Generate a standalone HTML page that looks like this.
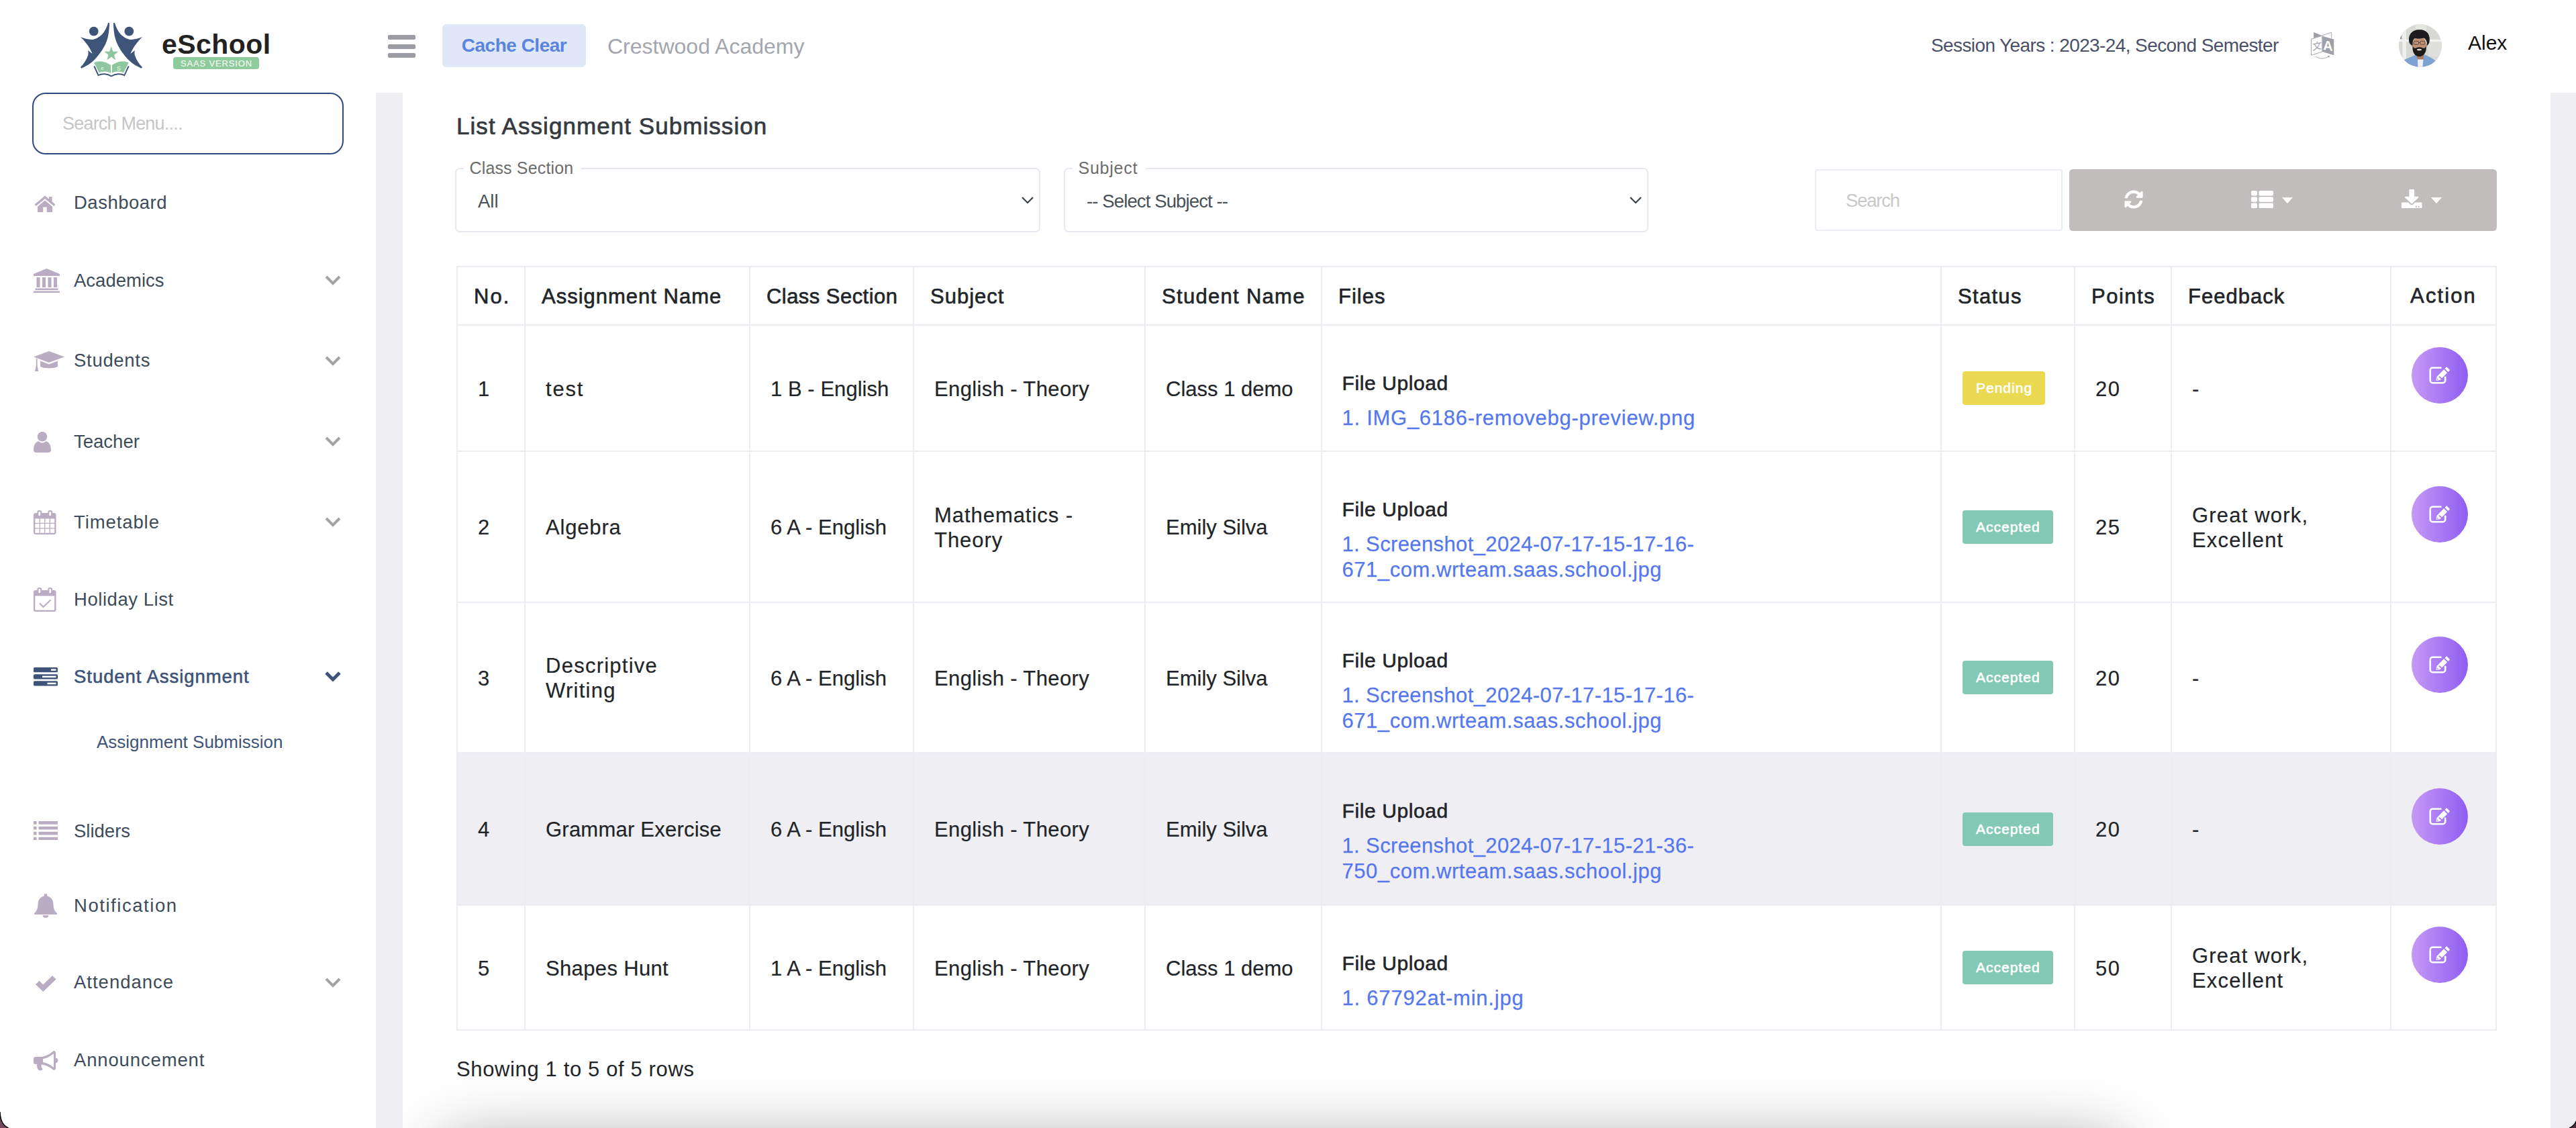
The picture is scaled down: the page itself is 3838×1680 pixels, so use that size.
<!DOCTYPE html>
<html lang="en">
<head>
<meta charset="utf-8">
<title>Assignment Submission - eSchool SaaS</title>
<style>
*{box-sizing:border-box;margin:0;padding:0}
html,body{width:3838px;height:1680px;overflow:hidden;background:#fff}
body{position:relative;font-family:"Liberation Sans",Arial,sans-serif;color:#212529;font-size:31px}
.abs{position:absolute;white-space:nowrap;line-height:1}
a{text-decoration:none;color:inherit}
ul{list-style:none}
/* ---------- top bar ---------- */
#topbar{position:absolute;left:0;top:0;width:3838px;height:138px;background:#fff}
#brand{position:absolute;left:0;top:0;width:560px;height:138px}
#brand .name{left:241px;top:45.5px;font-size:41px;font-weight:700;color:#222;letter-spacing:.45px}
#brand .saas{left:258px;top:85px;width:128px;height:18px;border-radius:4px;background:#8fcb9c;color:#fff;font-size:13px;line-height:20px;text-align:center;letter-spacing:.85px;padding-left:1px}
#burger{position:absolute;left:578px;top:52px;width:41px;height:34px}
#burger i{position:absolute;left:0;width:41px;height:7px;border-radius:2px;background:#9c9ca4}
#cache{left:659px;top:36px;width:214px;height:64px;border-radius:6px;background:#dfe7f8;color:#5b84dc;font-weight:700;font-size:28px;line-height:64px;text-align:center;letter-spacing:-.5px}
#school{left:905px;top:51px;font-size:32px;color:#a3a6ad;line-height:36px}
#session{left:2877px;top:50px;font-size:28px;letter-spacing:-.6px;color:#4b5069;line-height:36px}
#lang{position:absolute;left:3442px;top:47px;width:38px;height:41px}
#avatar{position:absolute;left:3574px;top:36px;width:64px;height:64px;border-radius:50%;overflow:hidden}
#uname{left:3677px;top:46px;font-size:30px;color:#111;line-height:36px}
/* ---------- sidebar ---------- */
#sidebar{position:absolute;left:0;top:138px;width:560px;height:1542px;background:#fff}
#menusearch{position:absolute;left:48px;top:0;width:464px;height:92px;border:2px solid #2f4a80;border-radius:20px;padding-left:43px;font-size:27px;line-height:88px;color:#c6c6c6;letter-spacing:-.8px}
#nav li{position:absolute;left:0;width:560px;height:60px}
#nav li svg.ic{position:absolute;fill:#b9acc3}
#nav li .t{position:absolute;left:110px;font-size:27.5px;line-height:34px;color:#3e4b5b;white-space:nowrap}
#nav li svg.ch{position:absolute;left:484px;width:24px;height:15px;fill:none;stroke:#a3a3a3;stroke-width:4}
#nav li.act .t{color:#3e5379;font-weight:400;-webkit-text-stroke:.6px #3e5379}
#nav li.act svg.ic{fill:#3e5379}
#nav li.act svg.ch{stroke:#3e5379;stroke-width:5}
#nav li.sub .t{left:144px;font-weight:400;-webkit-text-stroke:0;color:#3e5379;font-size:26px}
/* ---------- content ---------- */
#content{position:absolute;left:560px;top:138px;width:3278px;height:1542px;background:#f0eff4}
#card{position:absolute;left:40px;top:0;width:3200px;height:1542px;background:#fff;overflow:hidden}

#title{left:80px;top:30px;font-size:35px;font-weight:400;-webkit-text-stroke:.7px #343a40;color:#343a40;line-height:40px;letter-spacing:1.06px}
.fs{position:absolute;top:112px;height:96px;border:2px solid #e9e8f0;border-radius:7px}
.fs .lg{position:absolute;left:11px;top:-19.5px;height:34px;background:#fff;padding-left:8.5px;font-size:25px;letter-spacing:.15px;line-height:34px;color:#6c6c6c;white-space:nowrap}
.fs .lg em{font-style:normal}
.fs .val{position:absolute;left:32px;top:30.5px;font-size:27.500px;line-height:34px;color:#495057;white-space:nowrap}
.fs .chev{position:absolute;right:8px;top:41px;width:18px;height:11px;fill:none;stroke:#3c4148;stroke-width:2.200}
#search{position:absolute;left:2104px;top:114px;width:369px;height:92px;border:2px solid #ebedf2;border-radius:4px;padding-left:44px;font-size:27.500px;line-height:90px;color:#c9c8c8;letter-spacing:-1.2px}
#tools{position:absolute;left:2483px;top:114px;width:637px;height:92px;border-radius:5.5px;background:#c1bdbc}
#tools svg{position:absolute;fill:#fff}
#tbl{position:absolute;left:80px;top:258px;width:3040px;table-layout:fixed;border-collapse:separate;border-spacing:0;border-right:2px solid #ebedf2;border-bottom:2px solid #ebedf2}
#tbl th,#tbl td{border-left:2px solid #ebedf2;border-top:2px solid #ebedf2;text-align:left;vertical-align:middle;line-height:37px}
#tbl th{height:87px;padding:2px 0 0 24px;font-size:31px;font-weight:400;-webkit-text-stroke:.65px #212529;letter-spacing:1px;color:#212529;white-space:nowrap}
#tbl td{padding:2px 0 0 30px;font-size:31px;color:#212529;letter-spacing:.5px;-webkit-text-stroke:.2px #212529}
#tbl th.ac{text-align:center;padding:0}
#tbl tr.hov td{background:#efeef3}
#tbl td.fl{vertical-align:top;padding-top:67px;padding-left:29.5px}
#tbl td.fl b{display:block;font-size:30px;font-weight:400;-webkit-text-stroke:.6px #212529;line-height:37px;color:#212529;letter-spacing:.6px}
#tbl td.fl .lnk{display:block;margin-top:15px;color:#5577ee;-webkit-text-stroke:.25px #5577ee;line-height:37.500px}
#tbl td.fl .lnk{width:700px}
#tbl td.fl .lnk span{display:inline}
.bdg{display:inline-block;height:50px;line-height:50px;padding:0 20px;border-radius:4px;color:#fff;font-size:21px;font-weight:400;-webkit-text-stroke:.6px #fff;vertical-align:middle;letter-spacing:1px;position:relative;top:-1px;left:1px;padding-right:19px}
.bdg.pending{background:#ecd952}
.bdg.accepted{background:#83c9b4}
#tbl td.ac{padding:0 0 0 30px}
.edit{display:block;width:84px;height:84px;border-radius:50%;background:linear-gradient(to right,#c699f6,#8e5df1);margin-bottom:38px;position:relative}
.edit svg{position:absolute;left:26px;top:29px}
#showing{left:80px;top:1435.5px;letter-spacing:.63px;font-size:31px;line-height:37px;color:#212529}
#shadow{position:absolute;left:60px;top:1574px;width:2500px;height:100px;border-radius:50px;box-shadow:0 0 90px 20px rgba(0,0,0,.32)}
</style>
</head>
<body>
<header id="topbar">
  <div id="brand">
    <svg class="abs" style="left:119px;top:33px" width="94" height="82" viewBox="0 0 94 82">
      <g fill="#3f5479">
        <circle cx="20.700" cy="13.700" r="6.900"/><path d="M42.200 0.900L44 0.900C44 8 43 20 40.200 27.500C37 37 30 47 22 55.800C16 62 9 66 2.500 68.700L0.900 67.300C5 63 10 56 12.300 48.700C12.800 46 12.500 44 12.100 42.100L18.500 47C17 43 15.500 40.500 14 38C11 33 6 27 0.900 22.100C6 24 12 26 17.600 26.100C22 26 28 23 33.500 17.700C37 13.500 40 8 42.200 0.900Z"/>
        <g transform="translate(94,0) scale(-1,1)"><circle cx="20.700" cy="13.700" r="6.900"/><path d="M42.200 0.900L44 0.900C44 8 43 20 40.200 27.500C37 37 30 47 22 55.800C16 62 9 66 2.500 68.700L0.900 67.300C5 63 10 56 12.300 48.700C12.800 46 12.500 44 12.100 42.100L18.500 47C17 43 15.500 40.500 14 38C11 33 6 27 0.900 22.100C6 24 12 26 17.600 26.100C22 26 28 23 33.500 17.700C37 13.500 40 8 42.200 0.900Z"/></g>
      </g>
      <path d="M21.300 65.500L27.500 79.200C33 76.200 41 76.700 46.900 80.500C53 76.700 61 76.200 66.300 79.200L72.700 65.500" fill="none" stroke="#3f5479" stroke-width="1.900"/>
      <g fill="#8ec79f">
        <path d="M46.8 36.0L49.4 43.7L57.5 43.8L51.1 48.7L53.4 56.4L46.8 51.8L40.2 56.4L42.5 48.7L36.1 43.8L44.2 43.7z"/>
        <path d="M21.100 60.200C27 57.300 38 57.500 46 64.200L46 75.800C40 72.500 34 73 28.700 75.300Z"/>
        <path d="M72.700 60.200C66.800 57.300 55.800 57.500 47.800 64.200L47.800 75.800C53.800 72.500 59.800 73 65.100 75.300Z"/>
      </g>
      <text x="33.500" y="71" font-family="Liberation Sans, sans-serif" font-size="8" fill="#eef7f0" text-anchor="middle">e</text><text x="58" y="71.500" font-family="Liberation Sans, sans-serif" font-size="9" fill="#eef7f0" text-anchor="middle">S</text>
    </svg>
    <div class="abs name">eSchool</div>
    <div class="abs saas">SAAS VERSION</div>
  </div>
  <div id="burger"><i style="top:0"></i><i style="top:13.500px"></i><i style="top:27px"></i></div>
  <a class="abs" id="cache">Cache Clear</a>
  <div class="abs" id="school">Crestwood Academy</div>
  <div class="abs" id="session">Session Years : 2023-24, Second Semester</div>
  <svg id="lang" viewBox="0 0 38 41"><path d="M5.100 1.050L17.800 5.900L5.100 9.800z" fill="#9ea0a8"/><path d="M17.800 5.800L31.700 1.200V9.800" fill="#fff" stroke="#9ea0a8" stroke-width=".9"/><path d="M1.500 11.400L17.800 6.300V30.100L1.500 35.300z" fill="#fff" stroke="#9ea0a8" stroke-width=".9"/><path d="M18.100 6.700L35.300 11.500V35.200L18.100 30.100z" fill="#9ea0a8"/><text x="26.600" y="28" font-family="Liberation Sans, sans-serif" font-weight="700" font-size="20" fill="#fff" text-anchor="middle" transform="skewY(8)" style="transform-origin:26px 20px">A</text><text x="10.200" y="26.500" font-family="Liberation Sans, Noto Sans CJK JP, sans-serif" font-size="14" fill="#9ea0a8" text-anchor="middle" transform="skewY(-10)" style="transform-origin:10px 20px">文</text><path d="M8 37.100c5.500 4 13 4 19.500 0" fill="none" stroke="#9ea0a8" stroke-width=".9"/><path d="M25.800 36l3.400-.1-1.600 3z" fill="#9ea0a8"/></svg>
  <div id="avatar">
    <svg width="64" height="64" viewBox="0 0 64 64"><rect width="64" height="64" fill="#d6d9d4"/><rect x="25" y="0" width="16" height="22" fill="#e4e7e2"/><rect x="44" y="26" width="20" height="22" fill="#dfe0dc"/><rect x="5.500" y="0" width="5.500" height="64" fill="#eef0ed"/><rect x="0" y="23" width="18" height="3" fill="#f1f2f0"/><rect x="44" y="23" width="20" height="3" fill="#f3f4f2"/><rect x="0" y="12" width="4" height="10" fill="#8e9186"/><path d="M8 53C16 49.500 22 47.500 25 45.500L39 45.500C44 48 50 51 54 54L60 64L4 64Z" fill="#7ea3d3"/><path d="M25.500 42L38 42L36.500 53L28 53Z" fill="#a97a5f"/><path d="M28 52.500L36.500 52.500L35.500 64L28.500 64Z" fill="#eef0f4"/><circle cx="20.600" cy="31" r="2.300" fill="#b98a6e"/><circle cx="41" cy="31" r="2.300" fill="#b98a6e"/><ellipse cx="30.600" cy="30" rx="9.900" ry="12.500" fill="#c09072"/><path d="M15.500 27C13 14 22 7.500 30.500 8.200C40 7.500 48 14 45.500 27C44.500 30 43 31 42 31.500C42.500 26 40 21.500 37 20.500C32 22 26 21.500 23.500 21C21 23 20.500 27 20.500 31.500C18.500 31 16.500 30 15.500 27Z" fill="#1d1b1e"/><path d="M20.700 32C22 36 24 36.500 26 35.300C29 33.800 32 33.800 35 35.300C37.500 36.500 39.500 36 40.700 32C42 42 37 48.200 30.600 48.200C24 48.200 19.500 42 20.700 32Z" fill="#1f1a1a"/><ellipse cx="30.500" cy="38" rx="3.600" ry="1.300" fill="#e8dfd8"/><g fill="none" stroke="#40383a" stroke-width=".8"><rect x="22.300" y="25.300" width="7.200" height="5" rx="1.600"/><rect x="31.700" y="25.300" width="7.200" height="5" rx="1.600"/><path d="M29.500 27.500h2.200"/></g></svg>
  </div>
  <div class="abs" id="uname">Alex</div>
</header>
<aside id="sidebar">
  <div id="menusearch">Search Menu....</div>
  <ul id="nav">
    <li style="top:133.5px"><svg class="ic" style="left:51px;top:18.5px" width="32" height="26" viewBox="0 0 32 26"><path d="M16 1.500L0.500 14.500l2.200 2.600L16 6l13.300 11.100 2.200-2.600-5-4.200V3h-4.500v3.600z"/><path d="M16 8.500L5 17.700V26h8.200v-7.500h5.600V26H27v-8.300z"/></svg><a class="t" style="top:13.5px;letter-spacing:0.5px">Dashboard</a></li>
    <li style="top:249.5px"><svg class="ic" style="left:50px;top:12.5px" width="39" height="36" viewBox="0 0 39 36"><path d="M19.500 0L39 8v3H0V8z"/><path d="M4.500 13h5v15h-5zM13 13h5v15h-5zM21.500 13h5v15h-5zM30 13h5v15h-5z"/><path d="M2.500 29.500h34v2.500h-34zM0 33.500h39V36H0z"/></svg><a class="t" style="top:13.5px">Academics</a><svg class="ch" style="top:22.5px" viewBox="0 0 24 15"><polyline points="2,2 12,12 22,2"/></svg></li>
    <li style="top:368.5px"><svg class="ic" style="left:50px;top:16px" width="46" height="32" viewBox="0 0 46 32"><path d="M23 0l23 8.500L23 17 0 8.500z"/><path d="M10 14.500l13 5 13-5V22c0 4.500-26 4.500-26 0z"/><path d="M3.800 10.500l1.800.7V21l1.600 9H2.200l1.600-9z"/></svg><a class="t" style="top:13.5px;letter-spacing:0.7px">Students</a><svg class="ch" style="top:23.5px" viewBox="0 0 24 15"><polyline points="2,2 12,12 22,2"/></svg></li>
    <li style="top:489.5px"><svg class="ic" style="left:50px;top:15px" width="26" height="31" viewBox="0 0 26 31"><circle cx="13" cy="7.300" r="7.300"/><path d="M0 27.500C0 19 3.500 14.800 8 14.300c1.500 1.600 3 2.300 5 2.300s3.500-.7 5-2.300c4.500.5 8 4.700 8 13.200 0 2-1.500 3.500-4 3.500H4c-2.500 0-4-1.500-4-3.500z"/></svg><a class="t" style="top:13.5px">Teacher</a><svg class="ch" style="top:22.5px" viewBox="0 0 24 15"><polyline points="2,2 12,12 22,2"/></svg></li>
    <li style="top:609.5px"><svg class="ic" style="left:50px;top:12.5px" width="33.5" height="36" viewBox="0 0 33.5 36"><path d="M3 4h27.500a3 3 0 0 1 3 3v26a3 3 0 0 1-3 3H3a3 3 0 0 1-3-3V7a3 3 0 0 1 3-3z"/><path fill="#fff" d="M2.30 12.50h6.25v6.2h-6.25zM9.85 12.50h6.25v6.2h-6.25zM17.40 12.50h6.25v6.2h-6.25zM24.95 12.50h6.25v6.2h-6.25zM2.30 20.00h6.25v6.2h-6.25zM9.85 20.00h6.25v6.2h-6.25zM17.40 20.00h6.25v6.2h-6.25zM24.95 20.00h6.25v6.2h-6.25zM2.30 27.50h6.25v6.2h-6.25zM9.85 27.50h6.25v6.2h-6.25zM17.40 27.50h6.25v6.2h-6.25zM24.95 27.50h6.25v6.2h-6.25z"/><rect x="5.300" y="0" width="7" height="10.500" rx="3.300"/><rect x="21.200" y="0" width="7" height="10.500" rx="3.300"/><g fill="#fff"><rect x="7.400" y="2" width="2.800" height="6.300" rx="1.400"/><rect x="23.300" y="2" width="2.800" height="6.300" rx="1.400"/></g></svg><a class="t" style="top:13.5px;letter-spacing:0.9px">Timetable</a><svg class="ch" style="top:22.5px" viewBox="0 0 24 15"><polyline points="2,2 12,12 22,2"/></svg></li>
    <li style="top:724.5px"><svg class="ic" style="left:50px;top:12.5px" width="33.5" height="36" viewBox="0 0 33.5 36"><path d="M3 4h27.500a3 3 0 0 1 3 3v26a3 3 0 0 1-3 3H3a3 3 0 0 1-3-3V7a3 3 0 0 1 3-3z"/><path fill="#fff" d="M2.300 12.500h28.900v21.200H2.300z"/><rect x="5.300" y="0" width="7" height="10.500" rx="3.300"/><rect x="21.200" y="0" width="7" height="10.500" rx="3.300"/><g fill="#fff"><rect x="7.400" y="2" width="2.800" height="6.300" rx="1.400"/><rect x="23.300" y="2" width="2.800" height="6.300" rx="1.400"/></g><polyline points="9,23.500 14.500,29 25.500,18.500" fill="none" stroke="#b9acc3" stroke-width="2.100"/></svg><a class="t" style="top:13.5px;letter-spacing:0.55px">Holiday List</a></li>
    <li class="act" style="top:839.5px"><svg class="ic" style="left:50px;top:16.5px" width="36" height="27.5" viewBox="0 0 36 27.5"><rect x="0" y="0" width="36" height="7.300" rx="1.600"/><rect x="0" y="10.200" width="36" height="7.300" rx="1.600"/><rect x="0" y="20.300" width="36" height="7.300" rx="1.600"/><g fill="#fff"><rect x="26" y="2.400" width="7.500" height="2.500"/><rect x="13" y="12.600" width="20.500" height="2.500"/><rect x="20.500" y="22.700" width="13" height="2.500"/></g></svg><a class="t" style="top:13.5px;letter-spacing:.95px">Student Assignment</a><svg class="ch" style="top:22.5px" viewBox="0 0 24 15"><polyline points="2,2 12,12 22,2"/></svg></li>
    <li class="sub" style="top:936px"><a class="t" style="top:13.5px">Assignment Submission</a></li>
    <li style="top:1069.5px"><svg class="ic" style="left:50px;top:15px" width="36" height="28.5" viewBox="0 0 36 28.5"><path d="M0 0h4.600v4.700H0zM7.500 0H36v4.700H7.500zM0 7.9h4.600v4.700H0zM7.500 7.9H36v4.700H7.500zM0 15.8h4.600v4.700H0zM7.500 15.8H36v4.700H7.500zM0 23.7h4.600v4.700H0zM7.500 23.7H36v4.700H7.500z"/></svg><a class="t" style="top:13.5px">Sliders</a></li>
    <li style="top:1180.3px"><svg class="ic" style="left:51px;top:12.7px" width="34" height="36" viewBox="0 0 34 36"><path d="M17 0a2.400 2.400 0 0 1 2.400 2.400v1.200c6 1.400 9.100 6.400 9.100 12.400 0 7 2.500 10.500 5.500 13.200V31H0v-1.800c3-2.700 5.500-6.200 5.500-13.200 0-6 3.100-11 9.100-12.400V2.400A2.400 2.400 0 0 1 17 0z"/><path d="M12.600 32.300h8.800a4.400 3.700 0 0 1-8.800 0z"/></svg><a class="t" style="top:13.5px;letter-spacing:1.55px">Notification</a></li>
    <li style="top:1294.8px"><svg class="ic" style="left:53px;top:20.2px" width="30.5" height="24" viewBox="0 0 30.5 24"><path d="M0 13.300l5.500-5.500 5.700 5.700L25 0l5.500 5.500L11.200 24z"/></svg><a class="t" style="top:13.5px;letter-spacing:1.0px">Attendance</a><svg class="ch" style="top:23.2px" viewBox="0 0 24 15"><polyline points="2,2 12,12 22,2"/></svg></li>
    <li style="top:1410px"><svg class="ic" style="left:50px;top:17px" width="36.5" height="31" viewBox="0 0 36.5 31"><path d="M30 0c1.700 0 3 1.200 3 3v7.600c2 .5 3.500 2 3.500 3.900s-1.500 3.400-3.500 3.900V26c0 1.800-1.300 3-3 3-5.500-4.600-11.500-7.700-18-8.400-1 2.200-.3 4.700 1.600 6.600-1 2.300-4.300 2.700-6.500 1.300-1.500-3-2.800-5.600-2.200-8.500H3a3 3 0 0 1-3-3v-5a3 3 0 0 1 3-3h8c7-.5 13-4 19-9z"/><path fill="#fff" d="M30 4.200v20.600c-5-4-10.200-6.800-16-7.700v-5.200c5.800-.9 11-3.700 16-7.700z"/></svg><a class="t" style="top:13.5px;letter-spacing:0.85px">Announcement</a></li>
  </ul>
</aside>
<main id="content">
  <section id="card">
    <h4 id="title" class="abs">List Assignment Submission</h4>
    <div class="fs" style="left:78px;width:872px"><span class="lg" style="width:174px"><em>Class Section</em></span><span class="val">All</span><svg class="chev" viewBox="0 0 18 11"><polyline points="1,1 9,9 17,1"/></svg></div>
    <div class="fs" style="left:985px;width:871px"><span class="lg" style="width:109px;letter-spacing:.75px"><em>Subject</em></span><span class="val" style="letter-spacing:-.88px">-- Select Subject --</span><svg class="chev" viewBox="0 0 18 11"><polyline points="1,1 9,9 17,1"/></svg></div>
    <div id="search"><span>Search</span></div>
    <div id="tools">
      <svg style="left:82px;top:31px" width="28" height="28" viewBox="0 0 512 512"><path d="M370.720 133.280C339.458 104.008 298.888 87.962 255.848 88c-77.458.068-144.328 53.178-162.791 126.850-1.344 5.363-6.122 9.150-11.651 9.150H24.103c-7.498 0-13.194-6.807-11.807-14.176C33.933 94.924 134.813 8 256 8c66.448 0 126.791 26.136 171.315 68.685L463.030 40.970C478.149 25.851 504 36.559 504 57.941V192c0 13.255-10.745 24-24 24H345.941c-21.382 0-32.090-25.851-16.971-40.971l41.750-41.749zM32 296h134.059c21.382 0 32.090 25.851 16.971 40.971l-41.750 41.750c31.262 29.273 71.835 45.319 114.876 45.280 77.418-.070 144.315-53.144 162.787-126.849 1.344-5.363 6.122-9.150 11.651-9.150h57.304c7.498 0 13.194 6.807 11.807 14.176C478.067 417.076 377.187 504 256 504c-66.448 0-126.791-26.136-171.315-68.685L48.970 471.030C33.851 486.149 8 475.441 8 454.059V320c0-13.255 10.745-24 24-24z"/></svg>
      <svg style="left:271px;top:32px" width="33" height="26" viewBox="0 0 33 26"><rect x="0" y="0" width="9" height="7.400" rx="1.800"/><rect x="11.500" y="0" width="21.500" height="7.400" rx="1.800"/><rect x="0" y="9.300" width="9" height="7.400" rx="1.800"/><rect x="11.500" y="9.300" width="21.500" height="7.400" rx="1.800"/><rect x="0" y="18.600" width="9" height="7.400" rx="1.800"/><rect x="11.500" y="18.600" width="21.500" height="7.400" rx="1.800"/></svg>
      <svg style="left:317px;top:41.500px" width="16" height="9" viewBox="0 0 16 9"><path d="M0 0h16L8 9z"/></svg>
      <svg style="left:495px;top:29.500px" width="30.500" height="28.500" viewBox="0 0 512 512" preserveAspectRatio="none"><path d="M216 0h80c13.300 0 24 10.700 24 24v168h87.700c17.800 0 26.700 21.500 14.100 34.100L269.700 378.300c-7.500 7.500-19.800 7.500-27.300 0L90.100 226.100c-12.600-12.600-3.700-34.100 14.100-34.100H192V24c0-13.300 10.700-24 24-24zm296 376v112c0 13.300-10.700 24-24 24H24c-13.300 0-24-10.700-24-24V376c0-13.300 10.700-24 24-24h146.700l49 49c20.100 20.100 52.500 20.100 72.600 0l49-49H488c13.300 0 24 10.700 24 24zm-124 88c0-11-9-20-20-20s-20 9-20 20 9 20 20 20 20-9 20-20zm64 0c0-11-9-20-20-20s-20 9-20 20 9 20 20 20 20-9 20-20z"/></svg>
      <svg style="left:539px;top:41.500px" width="16" height="9" viewBox="0 0 16 9"><path d="M0 0h16L8 9z"/></svg>
    </div>
<table id="tbl"><colgroup><col style="width:101px"><col style="width:335px"><col style="width:244px"><col style="width:345px"><col style="width:263px"><col style="width:923px"><col style="width:199px"><col style="width:144px"><col style="width:327px"><col style="width:157px"></colgroup>
<thead><tr><th style="letter-spacing:2px">No.</th><th>Assignment Name</th><th style="letter-spacing:.45px">Class Section</th><th>Subject</th><th style="letter-spacing:1.3px">Student Name</th><th>Files</th><th style="letter-spacing:1.3px">Status</th><th style="letter-spacing:1.5px">Points</th><th>Feedback</th><th class="ac" style="letter-spacing:2.1px">Action</th></tr></thead>
<tbody>
<tr style="height:188px"><td>1</td><td style="letter-spacing:1.8px">test</td><td style="letter-spacing:0.05px">1 B - English</td><td style="letter-spacing:0.37px">English - Theory</td><td style="letter-spacing:0px">Class 1 demo</td><td class="fl"><b>File Upload</b><a class="lnk"><span style="letter-spacing:0.73px">1. IMG_6186-removebg-preview.png</span></a></td><td><span class="bdg pending">Pending</span></td><td style="letter-spacing:1.5px">20</td><td>-</td><td class="ac"><a class="edit"><svg viewBox="0 0 32 26" width="32" height="26"><path fill="none" stroke="#fff" stroke-width="2.600" stroke-linecap="round" d="M17.500 1.800H5.300a3.500 3.500 0 0 0-3.500 3.500v15.400a3.500 3.500 0 0 0 3.500 3.500h15.400a3.500 3.500 0 0 0 3.500-3.500v-5"/><path fill="#fff" d="M26.200 0.300l5 5-2.600 2.600-5-5zM22.200 4.300l5 5-10.600 10.600-6 1 1-6z"/><path fill="#a97af3" d="M14.500 15.300l3.800 3.800 1.300-1.300-3.800-3.800zM12.300 17.500l-.5 2.300 2.300-.5z"/></svg></a></td></tr>
<tr style="height:225px"><td>2</td><td style="letter-spacing:0.83px">Algebra</td><td style="letter-spacing:0.05px">6 A - English</td><td style="letter-spacing:0.95px">Mathematics - <br>Theory</td><td style="letter-spacing:0px">Emily Silva</td><td class="fl"><b>File Upload</b><a class="lnk"><span style="letter-spacing:0.38px">1. Screenshot_2024-07-17-15-17-16-</span><span style="letter-spacing:0.55px">671_com.wrteam.saas.school.jpg</span></a></td><td><span class="bdg accepted">Accepted</span></td><td style="letter-spacing:1.5px">25</td><td style="letter-spacing:1.18px">Great work, <br>Excellent</td><td class="ac"><a class="edit"><svg viewBox="0 0 32 26" width="32" height="26"><path fill="none" stroke="#fff" stroke-width="2.600" stroke-linecap="round" d="M17.500 1.800H5.300a3.500 3.500 0 0 0-3.500 3.500v15.400a3.500 3.500 0 0 0 3.500 3.500h15.400a3.500 3.500 0 0 0 3.500-3.500v-5"/><path fill="#fff" d="M26.200 0.300l5 5-2.600 2.600-5-5zM22.200 4.300l5 5-10.600 10.600-6 1 1-6z"/><path fill="#a97af3" d="M14.500 15.300l3.800 3.800 1.300-1.300-3.800-3.800zM12.300 17.500l-.5 2.300 2.300-.5z"/></svg></a></td></tr>
<tr style="height:224px"><td>3</td><td style="letter-spacing:1.25px">Descriptive <br>Writing</td><td style="letter-spacing:0.05px">6 A - English</td><td style="letter-spacing:0.37px">English - Theory</td><td style="letter-spacing:0px">Emily Silva</td><td class="fl"><b>File Upload</b><a class="lnk"><span style="letter-spacing:0.38px">1. Screenshot_2024-07-17-15-17-16-</span><span style="letter-spacing:0.55px">671_com.wrteam.saas.school.jpg</span></a></td><td><span class="bdg accepted">Accepted</span></td><td style="letter-spacing:1.5px">20</td><td>-</td><td class="ac"><a class="edit"><svg viewBox="0 0 32 26" width="32" height="26"><path fill="none" stroke="#fff" stroke-width="2.600" stroke-linecap="round" d="M17.500 1.800H5.300a3.500 3.500 0 0 0-3.500 3.500v15.400a3.500 3.500 0 0 0 3.500 3.500h15.400a3.500 3.500 0 0 0 3.500-3.500v-5"/><path fill="#fff" d="M26.200 0.300l5 5-2.600 2.600-5-5zM22.200 4.300l5 5-10.600 10.600-6 1 1-6z"/><path fill="#a97af3" d="M14.500 15.300l3.800 3.800 1.300-1.300-3.800-3.800zM12.300 17.500l-.5 2.300 2.300-.5z"/></svg></a></td></tr>
<tr style="height:227px" class="hov"><td>4</td><td style="letter-spacing:0.23px">Grammar Exercise</td><td style="letter-spacing:0.05px">6 A - English</td><td style="letter-spacing:0.37px">English - Theory</td><td style="letter-spacing:0px">Emily Silva</td><td class="fl"><b>File Upload</b><a class="lnk"><span style="letter-spacing:0.38px">1. Screenshot_2024-07-17-15-21-36-</span><span style="letter-spacing:0.55px">750_com.wrteam.saas.school.jpg</span></a></td><td><span class="bdg accepted">Accepted</span></td><td style="letter-spacing:1.5px">20</td><td>-</td><td class="ac"><a class="edit"><svg viewBox="0 0 32 26" width="32" height="26"><path fill="none" stroke="#fff" stroke-width="2.600" stroke-linecap="round" d="M17.500 1.800H5.300a3.500 3.500 0 0 0-3.500 3.500v15.400a3.500 3.500 0 0 0 3.500 3.500h15.400a3.500 3.500 0 0 0 3.500-3.500v-5"/><path fill="#fff" d="M26.200 0.300l5 5-2.600 2.600-5-5zM22.200 4.300l5 5-10.600 10.600-6 1 1-6z"/><path fill="#a97af3" d="M14.500 15.300l3.800 3.800 1.300-1.300-3.800-3.800zM12.300 17.500l-.5 2.300 2.300-.5z"/></svg></a></td></tr>
<tr style="height:186px"><td>5</td><td style="letter-spacing:0.35px">Shapes Hunt</td><td style="letter-spacing:0.05px">1 A - English</td><td style="letter-spacing:0.37px">English - Theory</td><td style="letter-spacing:0px">Class 1 demo</td><td class="fl"><b>File Upload</b><a class="lnk"><span style="letter-spacing:0.79px">1. 67792at-min.jpg</span></a></td><td><span class="bdg accepted">Accepted</span></td><td style="letter-spacing:1.5px">50</td><td style="letter-spacing:1.18px">Great work, <br>Excellent</td><td class="ac"><a class="edit"><svg viewBox="0 0 32 26" width="32" height="26"><path fill="none" stroke="#fff" stroke-width="2.600" stroke-linecap="round" d="M17.500 1.800H5.300a3.500 3.500 0 0 0-3.500 3.500v15.400a3.500 3.500 0 0 0 3.500 3.500h15.400a3.500 3.500 0 0 0 3.500-3.500v-5"/><path fill="#fff" d="M26.200 0.300l5 5-2.600 2.600-5-5zM22.200 4.300l5 5-10.600 10.600-6 1 1-6z"/><path fill="#a97af3" d="M14.500 15.300l3.800 3.800 1.300-1.300-3.800-3.800zM12.300 17.500l-.5 2.300 2.300-.5z"/></svg></a></td></tr>
</tbody></table>
    <div id="showing" class="abs">Showing 1 to 5 of 5 rows</div>
    <div id="shadow"></div>
  </section>
</main>
<svg class="abs" style="left:0;top:1656px" width="14" height="24" viewBox="0 0 14 24"><path d="M0 0Q.500 19 12.500 24H0z" fill="#734a5c"/><path d="M0 0Q.500 19 12.500 24" fill="none" stroke="#0a0a0a" stroke-width="1.600"/></svg>
<svg class="abs" style="left:3826px;top:1669px" width="12" height="11" viewBox="0 0 12 11"><path d="M12 1Q9.500 8 2 11H12z" fill="#4d2f3c"/><path d="M12 1Q9.500 8 2 11" fill="none" stroke="#0a0a0a" stroke-width="1.600"/></svg>
</body>
</html>
